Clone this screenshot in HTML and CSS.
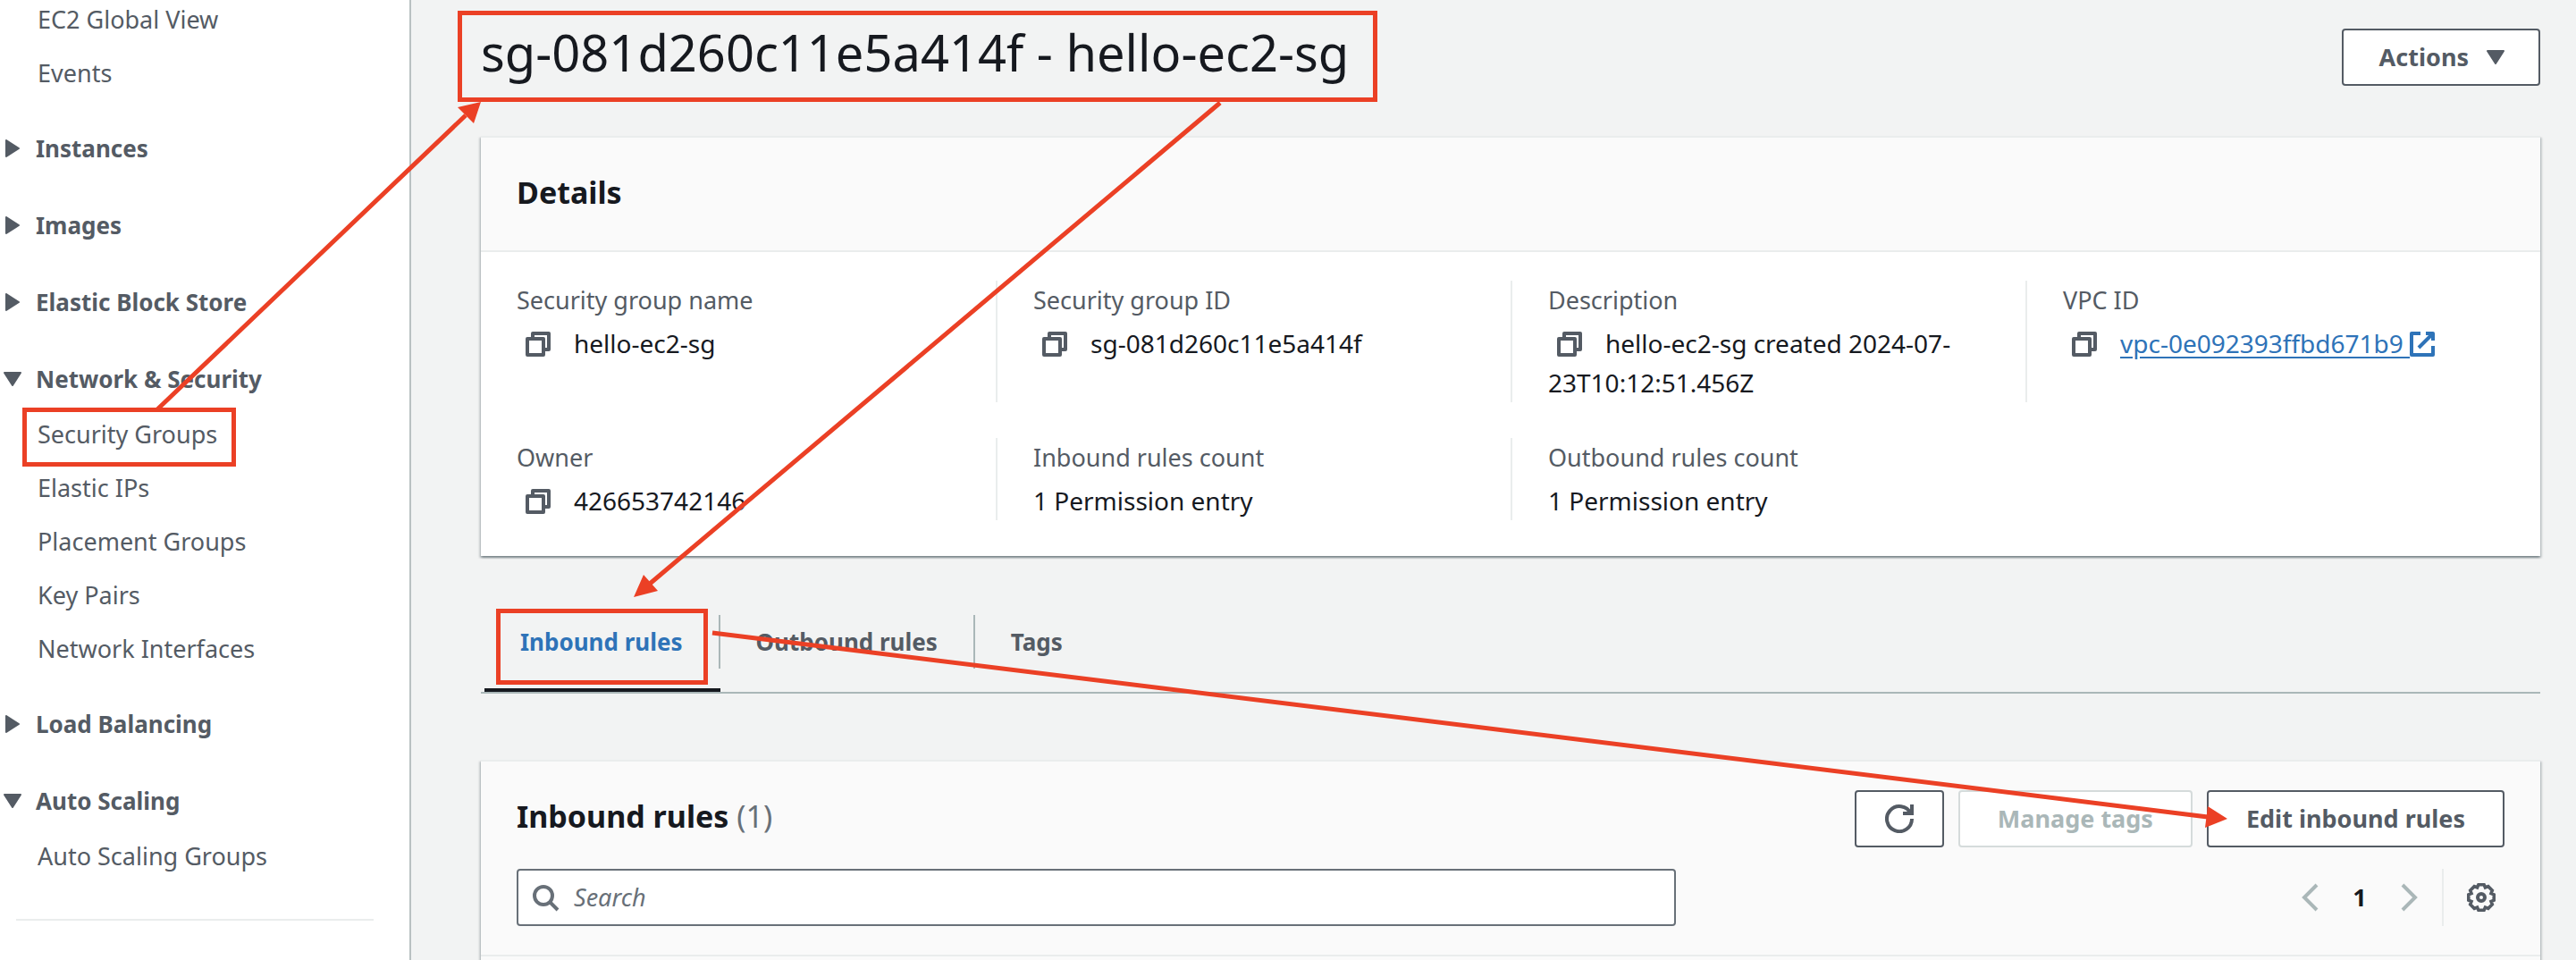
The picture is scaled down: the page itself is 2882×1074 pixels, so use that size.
FILE: index.html
```
<!DOCTYPE html>
<html lang="en">
<head>
<meta charset="utf-8">
<title>Security group | EC2</title>
<link rel="stylesheet" href="styles.css">
</head>
<body>
<svg class="symbols" aria-hidden="true">
  <symbol id="copy" viewBox="0 0 28 28"><path d="M8 8V2h18v18h-6M2 8h18v18H2z" fill="none" stroke="currentColor" stroke-width="4" stroke-linejoin="round"/></symbol>
  <symbol id="right" viewBox="0 0 20 20"><path d="M3 1v18L17 10z" fill="currentColor" stroke="currentColor" stroke-width="2" stroke-linejoin="round"/></symbol>
  <symbol id="down" viewBox="0 0 20 20"><path d="M1 3h18L10 17z" fill="currentColor" stroke="currentColor" stroke-width="2" stroke-linejoin="round"/></symbol>
</svg>
<div class="app">
  <nav class="sidebar" aria-label="EC2">
    <section>
      <ul class="links">
        <li><a href="#">EC2 Global View</a></li>
        <li><a href="#">Events</a></li>
      </ul>
    </section>
    <section><button class="group" type="button"><svg><use href="#right"/></svg>Instances</button></section>
    <section><button class="group" type="button"><svg><use href="#right"/></svg>Images</button></section>
    <section><button class="group" type="button"><svg><use href="#right"/></svg>Elastic Block Store</button></section>
    <section>
      <button class="group" type="button"><svg><use href="#down"/></svg>Network &amp; Security</button>
      <ul class="links">
        <li><a href="#">Security Groups</a></li>
        <li><a href="#">Elastic IPs</a></li>
        <li><a href="#">Placement Groups</a></li>
        <li><a href="#">Key Pairs</a></li>
        <li><a href="#">Network Interfaces</a></li>
      </ul>
    </section>
    <section><button class="group" type="button"><svg><use href="#right"/></svg>Load Balancing</button></section>
    <section>
      <button class="group" type="button"><svg><use href="#down"/></svg>Auto Scaling</button>
      <ul class="links">
        <li><a href="#">Auto Scaling Groups</a></li>
      </ul>
    </section>
    <hr>
  </nav>

  <main>
    <header class="page-head">
      <h1>sg-081d260c11e5a414f - hello-ec2-sg</h1>
      <button class="btn" type="button">Actions <svg class="caret"><use href="#down"/></svg></button>
    </header>

    <section class="card">
      <div class="card-head"><h2>Details</h2></div>
      <dl class="details">
        <div><dt>Security group name</dt><dd><button class="copy" type="button" aria-label="Copy"><svg><use href="#copy"/></svg></button>hello-ec2-sg</dd></div>
        <div><dt>Security group ID</dt><dd><button class="copy" type="button" aria-label="Copy"><svg><use href="#copy"/></svg></button>sg-081d260c11e5a414f</dd></div>
        <div><dt>Description</dt><dd><button class="copy" type="button" aria-label="Copy"><svg><use href="#copy"/></svg></button>hello-ec2-sg created 2024-07-23T10:12:51.456Z</dd></div>
        <div><dt>VPC ID</dt><dd><button class="copy" type="button" aria-label="Copy"><svg><use href="#copy"/></svg></button><a href="#">vpc-0e092393ffbd671b9&nbsp;<svg class="external" viewBox="0 0 28 28"><path d="M18 2h8v8M10 18 26 2M26 16v10H2V2h10" fill="none" stroke="currentColor" stroke-width="4" stroke-linejoin="round"/></svg></a></dd></div>
        <div><dt>Owner</dt><dd><button class="copy" type="button" aria-label="Copy"><svg><use href="#copy"/></svg></button>426653742146</dd></div>
        <div><dt>Inbound rules count</dt><dd>1 Permission entry</dd></div>
        <div><dt>Outbound rules count</dt><dd>1 Permission entry</dd></div>
      </dl>
    </section>

    <div class="tabs" role="tablist">
      <button class="tab active" type="button" role="tab" aria-selected="true">Inbound rules</button>
      <button class="tab" type="button" role="tab" aria-selected="false">Outbound rules</button>
      <button class="tab" type="button" role="tab" aria-selected="false">Tags</button>
    </div>

    <section class="card rules">
      <div class="rules-head">
        <div class="title-row">
          <h2>Inbound rules <span class="count">(1)</span></h2>
          <div class="actions">
            <button class="btn refresh" type="button" aria-label="Refresh"><svg viewBox="0 0 16 16"><path d="M10 5h5V0M15 8a7 7 0 1 1-.7-3" fill="none" stroke="currentColor" stroke-width="2"/></svg></button>
            <button class="btn" type="button" disabled>Manage tags</button>
            <button class="btn" type="button">Edit inbound rules</button>
          </div>
        </div>
        <div class="filter-row">
          <label class="search">
            <svg viewBox="0 0 16 16"><path d="M12 7A5 5 0 1 1 2 7a5 5 0 0 1 10 0zM15 15l-4.500-4.500" fill="none" stroke="currentColor" stroke-width="2"/></svg>
            <input type="search" placeholder="Search" aria-label="Search">
          </label>
          <div class="pager">
            <button class="arrow" type="button" aria-label="Previous page"><svg viewBox="0 0 20 32"><path d="M18 2 4 16l14 14" fill="none" stroke="currentColor" stroke-width="4"/></svg></button>
            <span class="page">1</span>
            <button class="arrow" type="button" aria-label="Next page"><svg viewBox="0 0 20 32"><path d="m2 2 14 14L2 30" fill="none" stroke="currentColor" stroke-width="4"/></svg></button>
            <button class="gear" type="button" aria-label="Preferences"><svg viewBox="-16 -16 32 32"><path d="M14.200-3.100v6.200L11 4.500 12.300 7.800 7.800 12.300 4.500 11 3.100 14.200h-6.200L-4.500 11-7.800 12.300-12.300 7.800-11 4.500-14.200 3.100v-6.200L-11-4.500-12.300-7.800-7.800-12.300-4.500-11-3.100-14.200h6.200L4.500-11 7.800-12.300 12.300-7.800 11-4.500z" fill="none" stroke="currentColor" stroke-width="3.600"/><circle r="4" fill="none" stroke="currentColor" stroke-width="4"/></svg></button>
          </div>
        </div>
      </div>
    </section>
  </main>
</div>

<svg class="annotations" aria-hidden="true">
  <g fill="none" stroke="#eb4025" stroke-width="5">
    <rect x="514.500" y="14.500" width="1024" height="97"/>
    <rect x="27.500" y="458.500" width="234" height="61"/>
    <rect x="557.500" y="683.500" width="232" height="80"/>
    <path d="M176 458 521 129M1365 115 727 653M797 708 2470 914"/>
  </g>
  <path d="M538 114 512 120 530 138zM709 668 720 643 736 661zM2492 916 2470 902 2467 926z" fill="#eb4025"/>
</svg>
</body>
</html>
```
FILE: styles.css
```
* { box-sizing: border-box; }

body {
  position: relative;
  margin: 0;
  background: #f2f3f3;
  color: #16191f;
  font: 28px/44px "Noto Sans", "Open Sans", sans-serif;
}

button { margin: 0; padding: 0; border: 0; background: none; color: inherit; font: inherit; }
h1, h2, ul, dl, dd { margin: 0; padding: 0; }
svg { display: block; }
.symbols { position: absolute; width: 0; height: 0; }

.app { display: flex; min-height: 100vh; }

/* Side navigation */
.sidebar {
  display: flex;
  flex: 0 0 460px;
  flex-direction: column;
  gap: 40px;
  background: #fff;
  border-right: 2px solid #b9c1c2;
  color: #545b64;
  font-size: 27px;
}
.links { display: grid; gap: 16px; padding-left: 42px; list-style: none; }
.links a { color: inherit; text-decoration: none; }
.group { display: flex; align-items: center; gap: 16px; height: 46px; padding: 0 0 2px 4px; font-size: 26px; font-weight: 700; }
.group svg { width: 20px; height: 20px; }
.group + .links { padding-top: 16px; }
.sidebar hr { width: 400px; margin: 8px 0 0 18px; border: 0; border-top: 2px solid #eaeded; }

/* Content */
main { display: flex; flex: 1; flex-direction: column; min-width: 0; padding: 22px 40px 0 78px; }
.page-head { display: flex; align-items: flex-start; justify-content: space-between; height: 130px; }
h1 { font-size: 56px; font-weight: 400; line-height: 72px; }
h2 { font-size: 34px; line-height: 58px; }
.count { color: #687078; font-weight: 400; }

.btn {
  display: flex;
  align-items: center;
  justify-content: center;
  gap: 20px;
  height: 64px;
  padding: 0 42px;
  border: 2px solid #545b64;
  border-radius: 4px;
  background: #fff;
  color: #545b64;
  font-size: 27px;
  font-weight: 700;
}
.btn:disabled { border-color: #d5dbdb; color: #aab7b8; }
.page-head .btn { margin-top: 10px; padding: 0 38px 0 40px; }
.caret { width: 20px; height: 20px; }

.card {
  border-top: 2px solid #eaeded;
  background: #fff;
  box-shadow: 0 2px 2px rgba(0, 28, 36, .3), 2px 2px 2px rgba(0, 28, 36, .15), -2px 2px 2px rgba(0, 28, 36, .15);
}
.card-head { padding: 32px 40px 36px; border-bottom: 2px solid #eaeded; background: #fafafa; }

.details { display: grid; grid-template-columns: repeat(4, 1fr); gap: 40px 0; padding: 32px 0 40px; }
.details > div { padding: 0 40px; border-left: 2px solid #eaeded; }
.details > div:nth-child(4n + 1) { border-left: 0; }
dt { margin-bottom: 4px; color: #545b64; font-size: 27px; }
dd a { color: #2e73b8; text-underline-offset: 4px; }
.copy { display: inline-block; margin: 0 26px 0 10px; color: #545b64; vertical-align: -4px; line-height: 28px; }
.copy svg, .external { width: 28px; height: 28px; }
.external { display: inline-block; vertical-align: -4px; }

/* Tabs */
.tabs { display: flex; height: 88px; margin: 66px 0 74px; padding-left: 4px; border-bottom: 2px solid #aab7b8; }
.tab {
  display: flex;
  border-bottom: 4px solid transparent;
  color: #545b64;
  font-size: 26px;
  font-weight: 700;
  line-height: 60px;
  padding-left: 40px;
}
.tab:not(:last-child)::after { content: ""; height: 60px; margin-left: 40px; border-right: 2px solid #aab7b8; }
.tab.active { border-color: #16191f; color: #2e73b8; }

/* Rules table header */
.rules { flex: 1; background: #fafafa; }
.rules-head { display: grid; gap: 24px; padding: 32px 40px; border-bottom: 2px solid #eaeded; }
.title-row, .actions { display: flex; align-items: flex-start; justify-content: space-between; }
.actions { gap: 16px; }
.refresh { width: 100px; padding: 0; }
.refresh svg { width: 32px; height: 32px; }
.filter-row { display: grid; grid-template-columns: 7fr 5fr; }
.search {
  display: flex;
  align-items: center;
  gap: 16px;
  height: 64px;
  padding: 0 14px;
  border: 2px solid #687078;
  border-radius: 4px;
  background: #fff;
  color: #687078;
}
.search svg { width: 32px; height: 32px; }
.search input { flex: 1; min-width: 0; padding: 0; border: 0; outline: 0; background: none; font: inherit; font-size: 27px; }
.search input::placeholder { color: #687078; font-style: italic; opacity: 1; }
.pager { display: flex; align-items: center; justify-content: flex-end; }
.arrow { color: #aab7b8; }
.arrow svg { width: 20px; height: 32px; }
.page { width: 92px; font-size: 27px; font-weight: 700; text-align: center; }
.gear { display: flex; align-items: center; height: 64px; margin-left: 26px; padding: 0 10px 0 26px; border-left: 2px solid #eaeded; color: #545b64; }
.gear svg { width: 32px; height: 32px; }

/* Call-out boxes and arrows drawn over the page */
.annotations { position: absolute; inset: 0; width: 100%; height: 100%; overflow: visible; pointer-events: none; }
```
